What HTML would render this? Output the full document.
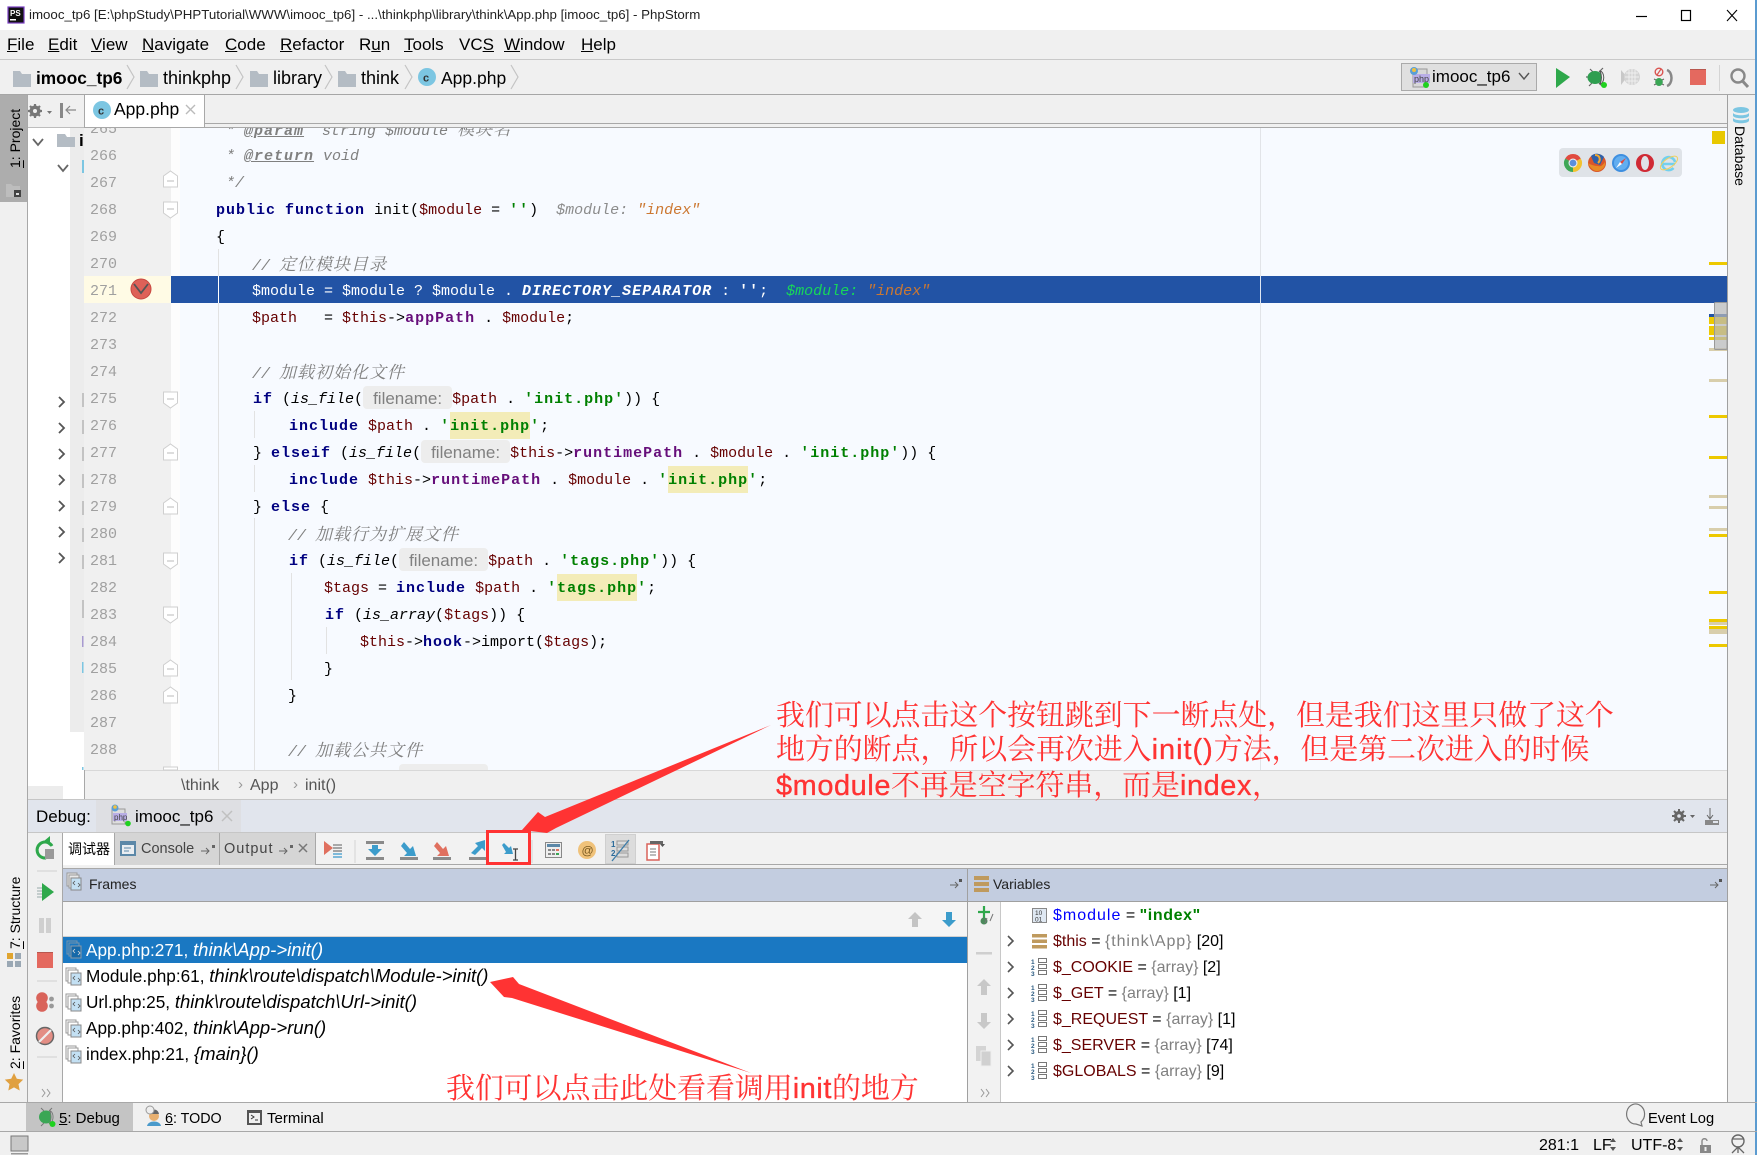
<!DOCTYPE html>
<html lang="zh"><head><meta charset="utf-8"><title>PhpStorm</title>
<style>
*{box-sizing:border-box}
html,body{margin:0;padding:0;width:1757px;height:1155px;overflow:hidden;background:#f0f0f0}
body{position:relative;font-family:"Liberation Sans","Noto Sans CJK SC",sans-serif;color:#000}
.r{position:absolute}
.t{position:absolute;white-space:pre;line-height:20px;height:20px}
u{text-decoration:underline}
.c{position:absolute;z-index:0;margin-top:2px;white-space:pre;height:27px;line-height:27px;font-family:"Liberation Mono","Noto Serif CJK SC",monospace;font-size:15px;color:#000}
.c.j{margin-top:0}
.n{position:absolute;left:90px;margin-top:2px;height:27px;line-height:27px;font-family:"Liberation Mono",monospace;font-size:15px;color:#a0a0a0}
.k{font-weight:bold;color:#000080;letter-spacing:1px}
.s{font-weight:bold;color:#008000;letter-spacing:1px}
.f{font-weight:bold;color:#660e7a;letter-spacing:1px}
.v{color:#660000}
.i{font-style:italic}
.cm{font-style:italic;color:#808080}
.cj{font-family:"Noto Serif CJK SC",serif;font-size:17px;letter-spacing:1px;font-style:italic;color:#808080}
.dt{font-weight:bold;letter-spacing:1px;text-decoration:underline}
.hl{position:relative}
.hl::before{content:"";position:absolute;left:0;right:0;top:-6px;height:27px;background:#f3ecb8;z-index:-1}
.h{display:inline-block;height:23px;vertical-align:top;margin-top:0;background:#ededed;border-radius:4px;color:#808080;font:17px/25px "Liberation Sans",sans-serif;text-align:center;letter-spacing:0;overflow:hidden}
.g{position:absolute;width:1px;background:#e2e2e2}
.ih{font-style:italic;color:#8c8c8c}
.io{font-style:italic;color:#cc7832}
.vr{writing-mode:vertical-rl;transform:rotate(180deg);position:absolute;white-space:pre;font-size:14px;line-height:16px}
.an{position:absolute;white-space:pre;color:#ff3333;font-family:"Noto Serif CJK SC","Liberation Sans",serif;z-index:8;line-height:36px;height:36px;font-size:28.9px}
.an b{font-family:"Liberation Sans",sans-serif;font-weight:normal;-webkit-text-stroke:.35px #ff3333;letter-spacing:.6px}
.ln{position:absolute;left:0;width:1757px;height:1px}
.fr{font-size:17.2px}
.fr i{font-size:18.5px}
</style></head><body>

<!-- title bar -->
<div class="r" style="left:0;top:0;width:1757px;height:30px;background:#fff"></div>
<div class="t" style="left:29px;top:5px;font-size:13.3px;color:#222">imooc_tp6 [E:\phpStudy\PHPTutorial\WWW\imooc_tp6] - ...\thinkphp\library\think\App.php [imooc_tp6] - PhpStorm</div>

<!-- menu -->
<div class="t" style="left:7px;top:35px;font-size:17px"><u>F</u>ile</div>
<div class="t" style="left:48px;top:35px;font-size:17px"><u>E</u>dit</div>
<div class="t" style="left:91px;top:35px;font-size:17px"><u>V</u>iew</div>
<div class="t" style="left:142px;top:35px;font-size:17px"><u>N</u>avigate</div>
<div class="t" style="left:225px;top:35px;font-size:17px"><u>C</u>ode</div>
<div class="t" style="left:280px;top:35px;font-size:17px"><u>R</u>efactor</div>
<div class="t" style="left:359px;top:35px;font-size:17px">R<u>u</u>n</div>
<div class="t" style="left:404px;top:35px;font-size:17px"><u>T</u>ools</div>
<div class="t" style="left:459px;top:35px;font-size:17px">VC<u>S</u></div>
<div class="t" style="left:504px;top:35px;font-size:17px"><u>W</u>indow</div>
<div class="t" style="left:581px;top:35px;font-size:17px"><u>H</u>elp</div>
<div class="ln" style="top:59px;background:#c9c9c9"></div>

<!-- nav bar -->
<div class="t" style="left:36px;top:68px;font-size:17.3px;font-weight:bold">imooc_tp6</div>
<div class="t" style="left:163px;top:68px;font-size:18px">thinkphp</div>
<div class="t" style="left:273px;top:68px;font-size:18px">library</div>
<div class="t" style="left:361px;top:68px;font-size:18px">think</div>
<div class="t" style="left:441px;top:68px;font-size:17.5px">App.php</div>
<div class="ln" style="top:94px;background:#a6a6a6"></div>
<div class="r" style="left:1401px;top:63px;width:136px;height:28px;background:#e0e0e0;border:1px solid #aaa"></div>
<div class="t" style="left:1432px;top:67px;font-size:17px">imooc_tp6</div>

<!-- left strip project -->
<div class="r" style="left:0;top:95px;width:27px;height:107px;background:#adadad"></div>
<div class="vr" style="left:7px;top:110px;height:58px"><u>1</u>: Project</div>
<div class="r" style="left:27px;top:95px;width:1px;height:1007px;background:#a8a8a8"></div>

<!-- project panel -->
<div class="r" style="left:28px;top:128px;width:56px;height:671px;background:#fff"></div>
<div class="r" style="left:70px;top:128px;width:14px;height:604px;background:#ececec"></div>
<div class="r" style="left:28px;top:786px;width:35px;height:13px;background:#ececec"></div>
<div class="r" style="left:28px;top:127px;width:56px;height:1px;background:#bdbdbd"></div>
<div class="r" style="left:84px;top:95px;width:1px;height:704px;background:#a8a8a8"></div>
<div class="t" style="left:79px;top:131px;font-size:17px;font-weight:bold;width:5px;overflow:hidden">i</div>

<!-- tab row -->
<div class="r" style="left:85px;top:95px;width:120px;height:33px;background:#fff;border-right:1px solid #a8a8a8"></div>
<div class="r" style="left:205px;top:123px;width:1522px;height:1px;background:#a8a8a8"></div>
<div class="r" style="left:85px;top:127px;width:1642px;height:1px;background:#a8a8a8"></div>
<div class="t" style="left:114px;top:99px;font-size:17.5px">App.php</div>

<!-- editor -->
<div class="r" style="left:84px;top:128px;width:1643px;height:642px;overflow:hidden;background:#f7faff">
<div class="r" style="left:-84px;top:-128px;width:1757px;height:1155px">
<div class="r" style="left:84px;top:0;width:87px;height:1155px;background:#f0f0f0"></div>
<div class="r" style="left:171px;top:0;width:9px;height:1155px;background:#fdfdfd"></div>
<div class="r" style="left:84px;top:276px;width:87px;height:27px;background:#fffbe5"></div>
<div class="r" style="left:171px;top:276px;width:1556px;height:27px;background:#2253a5"></div>
<div class="r" style="left:1260px;top:0;width:1px;height:1155px;background:#e2e4e8"></div>
<div class="r" style="left:1260px;top:276px;width:1px;height:27px;background:#dfe6f2"></div>
<div class="g" style="left:218px;top:249px;height:521px"></div>
<div class="r" style="left:218px;top:276px;width:1px;height:27px;background:#fff"></div>
<div class="g" style="left:254px;top:411px;height:27px"></div>
<div class="g" style="left:254px;top:465px;height:27px"></div>
<div class="g" style="left:254px;top:518px;height:252px"></div>
<div class="g" style="left:291px;top:573px;height:107px"></div>
<div class="g" style="left:326px;top:627px;height:27px"></div>

<div class="n" style="top:114px">265</div><div class="n" style="top:141px">266</div><div class="n" style="top:168px">267</div><div class="n" style="top:195px">268</div><div class="n" style="top:222px">269</div><div class="n" style="top:249px">270</div><div class="n" style="top:276px">271</div><div class="n" style="top:303px">272</div><div class="n" style="top:330px">273</div><div class="n" style="top:357px">274</div><div class="n" style="top:384px">275</div><div class="n" style="top:411px">276</div><div class="n" style="top:438px">277</div><div class="n" style="top:465px">278</div><div class="n" style="top:492px">279</div><div class="n" style="top:519px">280</div><div class="n" style="top:546px">281</div><div class="n" style="top:573px">282</div><div class="n" style="top:600px">283</div><div class="n" style="top:627px">284</div><div class="n" style="top:654px">285</div><div class="n" style="top:681px">286</div><div class="n" style="top:708px">287</div><div class="n" style="top:735px">288</div><div class="n" style="top:762px">289</div>

<div class="c cm j" style="left:226px;top:114px">* <span class="dt">@param</span>  string $module <span class="cj">模块名</span></div>
<div class="c cm" style="left:226px;top:141px">* <span class="dt">@return</span> void</div>
<div class="c cm" style="left:226px;top:168px">*/</div>
<div class="c" style="left:216px;top:195px"><span class="k">public</span> <span class="k">function</span> init(<span class="v">$module</span> = <span class="s">''</span>)  <span class="ih">$module: </span><span class="io">"index"</span></div>
<div class="c" style="left:216px;top:222px">{</div>
<div class="c cm j" style="left:252px;top:249px">// <span class="cj">定位模块目录</span></div>
<div class="c" style="left:252px;top:276px;color:#fff">$module = $module ? $module . <span style="font-weight:bold;font-style:italic;letter-spacing:1px">DIRECTORY_SEPARATOR</span> : <span style="font-weight:bold;letter-spacing:1px">''</span>;  <span style="font-style:italic;color:#17d65a">$module: </span><span style="font-style:italic;color:#cc7832">"index"</span></div>
<div class="c" style="left:252px;top:303px"><span class="v">$path</span>   = <span class="v">$this</span>-&gt;<span class="f">appPath</span> . <span class="v">$module</span>;</div>
<div class="c cm j" style="left:252px;top:357px">// <span class="cj">加载初始化文件</span></div>
<div class="c" style="left:253px;top:384px"><span class="k">if</span> (<span class="i">is_file</span>(<span class="h" style="width:89px">filename:</span><span class="v">$path</span> . <span class="s">'init.php'</span>)) {</div>
<div class="c" style="left:289px;top:411px"><span class="k">include</span> <span class="v">$path</span> . <span class="s">'<span class="hl">init.php</span>'</span>;</div>
<div class="c" style="left:253px;top:438px">} <span class="k">elseif</span> (<span class="i">is_file</span>(<span class="h" style="width:89px">filename:</span><span class="v">$this</span>-&gt;<span class="f">runtimePath</span> . <span class="v">$module</span> . <span class="s">'init.php'</span>)) {</div>
<div class="c" style="left:289px;top:465px"><span class="k">include</span> <span class="v">$this</span>-&gt;<span class="f">runtimePath</span> . <span class="v">$module</span> . <span class="s">'<span class="hl">init.php</span>'</span>;</div>
<div class="c" style="left:253px;top:492px">} <span class="k">else</span> {</div>
<div class="c cm j" style="left:288px;top:519px">// <span class="cj">加载行为扩展文件</span></div>
<div class="c" style="left:289px;top:546px"><span class="k">if</span> (<span class="i">is_file</span>(<span class="h" style="width:89px">filename:</span><span class="v">$path</span> . <span class="s">'tags.php'</span>)) {</div>
<div class="c" style="left:324px;top:573px"><span class="v">$tags</span> = <span class="k">include</span> <span class="v">$path</span> . <span class="s">'<span class="hl">tags.php</span>'</span>;</div>
<div class="c" style="left:325px;top:600px"><span class="k">if</span> (<span class="i">is_array</span>(<span class="v">$tags</span>)) {</div>
<div class="c" style="left:360px;top:627px"><span class="v">$this</span>-&gt;<span class="k">hook</span>-&gt;import(<span class="v">$tags</span>);</div>
<div class="c" style="left:324px;top:654px">}</div>
<div class="c" style="left:288px;top:681px">}</div>
<div class="c cm j" style="left:288px;top:735px">// <span class="cj">加载公共文件</span></div>
<div class="c" style="left:289px;top:762px"><span class="k">if</span> (<span class="i">is_file</span>(<span class="h" style="width:89px">filename:</span><span class="v">$path</span> . <span class="s">'common.php'</span>)) {</div>
</div></div>

<!-- browser popup -->
<div class="r" style="left:1559px;top:148px;width:123px;height:29px;background:#dfe3e8;border-radius:4px"></div>

<!-- breadcrumb -->
<div class="r" style="left:85px;top:770px;width:1642px;height:29px;background:#f0f0f0;border-top:1px solid #d8d8d8"></div>
<div class="t" style="left:181px;top:776px;font-size:16px;color:#555">\think</div>
<div class="t" style="left:250px;top:776px;font-size:16px;color:#555">App</div>
<div class="t" style="left:305px;top:776px;font-size:16px;color:#555">init()</div>
<div class="t" style="left:238px;top:775px;font-size:15px;color:#999">›</div>
<div class="t" style="left:293px;top:775px;font-size:15px;color:#999">›</div>

<!-- right strip -->
<div class="r" style="left:1727px;top:95px;width:1px;height:1007px;background:#a0a0a0"></div>
<div class="r" style="left:1755px;top:0;width:2px;height:1155px;background:#5b9bd0"></div>
<div class="vr" style="left:1732px;top:126px;height:56px;transform:none">Database</div>

<!-- debug header -->
<div class="r" style="left:28px;top:799px;width:1699px;height:34px;background:#e1e5ed;border-top:1px solid #c6c6c6;border-bottom:1px solid #c6c6c6"></div>
<div class="r" style="left:96px;top:800px;width:145px;height:32px;background:#dedfe3"></div>
<div class="t" style="left:36px;top:807px;font-size:17px">Debug:</div>
<div class="t" style="left:135px;top:807px;font-size:17px">imooc_tp6</div>

<!-- debug toolbar -->
<div class="r" style="left:63px;top:833px;width:1664px;height:33px;background:#f2f2f2"></div>
<div class="r" style="left:63px;top:864px;width:1664px;height:1px;background:#a8a8a8"></div>
<div class="r" style="left:63px;top:868px;width:1664px;height:1px;background:#a8a8a8"></div>
<div class="r" style="left:62px;top:833px;width:1px;height:269px;background:#a8a8a8"></div>
<div class="r" style="left:63px;top:833px;width:51px;height:32px;background:#fff"></div>
<div class="r" style="left:114px;top:833px;width:105px;height:32px;background:#d5d5d5;border-left:1px solid #a8a8a8"></div>
<div class="r" style="left:219px;top:833px;width:97px;height:32px;background:#d5d5d5;border-left:1px solid #a8a8a8;border-right:1px solid #a8a8a8"></div>
<div class="r" style="left:605px;top:834px;width:31px;height:30px;background:#dcdcdc;border:1px solid #cfcfcf"></div>
<div class="t" style="left:68px;top:839px;font-size:14px">调试器</div>
<div class="t" style="left:141px;top:839px;font-size:14.5px;color:#444">Console</div>
<div class="t" style="left:224px;top:839px;font-size:14.5px;color:#444;letter-spacing:1px">Output</div>

<!-- panel headers -->
<div class="r" style="left:63px;top:869px;width:1664px;height:33px;background:#c3cde0;border-bottom:1px solid #a0a0a0"></div>
<div class="t" style="left:89px;top:874px;font-size:14px;color:#222">Frames</div>
<div class="t" style="left:993px;top:874px;font-size:14px;color:#222">Variables</div>
<div class="r" style="left:63px;top:902px;width:904px;height:35px;background:#f5f5f5;border-bottom:1px solid #d0d0d0"></div>
<div class="r" style="left:63px;top:937px;width:904px;height:165px;background:#fff"></div>
<div class="r" style="left:63px;top:937px;width:904px;height:26px;background:#1a78c2"></div>
<div class="r" style="left:967px;top:869px;width:1px;height:233px;background:#a0a0a0"></div>
<div class="r" style="left:968px;top:902px;width:33px;height:200px;background:#f2f2f2;border-right:1px solid #c8c8c8"></div>
<div class="r" style="left:1001px;top:902px;width:726px;height:200px;background:#fff"></div>

<!-- frames -->
<div class="t fr" style="left:86px;top:940px;color:#fff">App.php:271, <i>think\App-&gt;init()</i></div>
<div class="t fr" style="left:86px;top:966px">Module.php:61, <i>think\route\dispatch\Module-&gt;init()</i></div>
<div class="t fr" style="left:86px;top:992px">Url.php:25, <i>think\route\dispatch\Url-&gt;init()</i></div>
<div class="t fr" style="left:86px;top:1018px">App.php:402, <i>think\App-&gt;run()</i></div>
<div class="t fr" style="left:86px;top:1044px">index.php:21, <i>{main}()</i></div>

<!-- variables -->
<div class="t" style="left:1053px;top:906px;font-size:16px"><span style="color:#0000ff;letter-spacing:1px">$module</span> = <b style="color:#008000;letter-spacing:.6px">"index"</b></div>
<div class="t" style="left:1053px;top:932px;font-size:16px"><span class="v">$this</span> = <span style="color:#808080;letter-spacing:.9px">{think\App}</span> [20]</div>
<div class="t" style="left:1053px;top:958px;font-size:16px"><span class="v">$_COOKIE</span> = <span style="color:#808080">{array}</span> [2]</div>
<div class="t" style="left:1053px;top:984px;font-size:16px"><span class="v">$_GET</span> = <span style="color:#808080">{array}</span> [1]</div>
<div class="t" style="left:1053px;top:1010px;font-size:16px"><span class="v">$_REQUEST</span> = <span style="color:#808080">{array}</span> [1]</div>
<div class="t" style="left:1053px;top:1036px;font-size:16px"><span class="v">$_SERVER</span> = <span style="color:#808080">{array}</span> [74]</div>
<div class="t" style="left:1053px;top:1062px;font-size:16px"><span class="v">$GLOBALS</span> = <span style="color:#808080">{array}</span> [9]</div>

<!-- left strip lower -->
<div class="vr" style="left:7px;top:875px;height:74px"><u>7</u>: Structure</div>
<div class="vr" style="left:7px;top:1000px;height:69px"><u>2</u>: Favorites</div>

<!-- bottom bars -->
<div class="ln" style="top:1102px;background:#a8a8a8"></div>
<div class="r" style="left:26px;top:1103px;width:107px;height:28px;background:#c4c4c4"></div>
<div class="ln" style="top:1131px;background:#a8a8a8"></div>
<div class="t" style="left:59px;top:1109px;font-size:15px"><u>5</u>: Debug</div>
<div class="t" style="left:165px;top:1109px;font-size:14.3px"><u>6</u>: TODO</div>
<div class="t" style="left:267px;top:1109px;font-size:15px">Terminal</div>
<div class="t" style="left:1648px;top:1109px;font-size:14.7px">Event Log</div>
<div class="t" style="left:1539px;top:1136px;font-size:16px">281:1</div>
<div class="t" style="left:1593px;top:1136px;font-size:16px">LF</div>
<div class="t" style="left:1631px;top:1136px;font-size:16px">UTF-8</div>

<!-- icons overlay -->
<svg class="r" style="left:0;top:0;z-index:5" width="1757" height="1155" viewBox="0 0 1757 1155">
<!-- app icon -->
<rect x="8" y="7" width="16" height="16" fill="#111" stroke="#7b3fc4" stroke-width="1.2"/>
<text x="10" y="16" font-size="8" font-weight="bold" fill="#fff" font-family="Liberation Sans">PS</text>
<rect x="10" y="19" width="6" height="1.5" fill="#fff"/>
<!-- window buttons -->
<path d="M1636 16.5h11" stroke="#000" stroke-width="1.2"/>
<rect x="1681.5" y="10.5" width="9" height="10" fill="none" stroke="#000" stroke-width="1.2"/>
<path d="M1727 10l10 11M1737 10l-10 11" stroke="#000" stroke-width="1.1"/>
<!-- nav folders & chevrons -->
<g fill="#b4bcc4">
<path d="M13 71h7l2 3h9v13H13z"/><path d="M140 71h7l2 3h9v13h-18z"/><path d="M250 71h7l2 3h9v13h-18z"/><path d="M338 71h7l2 3h9v13h-18z"/>
</g>
<g fill="none" stroke="#c4c4c4" stroke-width="1.2">
<path d="M127 65l7 12-7 12"/><path d="M236 65l7 12-7 12"/><path d="M325 65l7 12-7 12"/><path d="M405 65l7 12-7 12"/><path d="M511 65l7 12-7 12"/>
</g>
<circle cx="427" cy="77" r="9" fill="#7cc6e2"/><text x="423" y="81.500" font-size="11" font-weight="bold" fill="#333" font-family="Liberation Sans">c</text>
<!-- run config -->
<rect x="1413" y="69" width="14" height="18" fill="#d8d8d8" stroke="#999"/>
<rect x="1413" y="74" width="17" height="9" fill="#b9aee6"/>
<text x="1414" y="82" font-size="9" fill="#444" font-family="Liberation Sans">php</text>
<circle cx="1414" cy="71" r="4" fill="#5a9fd6"/><circle cx="1414" cy="70" r="2" fill="#f0c040"/>
<circle cx="1426" cy="85" r="3" fill="#1fd11f"/>
<path d="M1519 73l5 6 5-6" fill="none" stroke="#555" stroke-width="1.4"/>
<path d="M1556 68l14 9-14 11z" fill="#2ea84b"/>
<!-- bug -->
<path d="M1590 69l3 3M1603 68l-4 4M1586 77h4M1589 86l3-3M1603 87l-4-4" stroke="#666" stroke-width="1.2"/>
<ellipse cx="1595" cy="77.500" rx="7.500" ry="6.500" fill="#2f9e50"/><path d="M1600 71c5 1 5 12 0 13 1.800-4 1.800-9 0-13z" fill="#eef0ee" stroke="#555"/>
<circle cx="1604" cy="85" r="3" fill="#1fd11f"/>
<!-- coverage -->
<path d="M1621 70l6 7-6 8z" fill="#c8c8c8"/><circle cx="1632" cy="77" r="8" fill="#d4d4d4"/>
<path d="M1626 73h12M1625 77h14M1626 81h12M1629 70v14M1632 69v16M1635 70v14" stroke="#eee"/>
<!-- stop/attach -->
<circle cx="1659" cy="72" r="3.800" fill="none" stroke="#d9534f" stroke-width="1.400"/><path d="M1657 75l4-6" stroke="#d9534f" stroke-width="1.200"/>
<ellipse cx="1659" cy="82" rx="3.800" ry="4" fill="#3aa655"/><path d="M1654 79l2 1M1654 85l2-1M1664 79l-2 1M1664 85l-2-1" stroke="#666"/><path d="M1667 70c6 2 6 14 0 16" fill="none" stroke="#888" stroke-width="2.500"/>
<!-- stop -->
<rect x="1690" y="69" width="16" height="16" fill="#e4695f"/><rect x="1690" y="69" width="16" height="1" fill="#b8574f"/>
<path d="M1719.500 65v26" stroke="#d4d4d4"/>
<circle cx="1738" cy="76" r="6.500" fill="none" stroke="#888" stroke-width="2.400"/><path d="M1742.500 81l5.500 6" stroke="#888" stroke-width="3"/>
<!-- Project strip mini -->
<path d="M6 197v-13h5l2 2h7v11z" fill="#bdbdbd"/><rect x="14" y="190" width="7" height="7" fill="#444"/><rect x="16" y="193" width="3" height="2" fill="#ddd"/>
<!-- gear & hide -->
<g transform="translate(35,127)"><circle cx="0" cy="-16" r="5.500" fill="#777"/><path d="M0-23v14M-7-16h14M-5-21l10 10M5-21l-10 10" stroke="#777" stroke-width="2.200"/><circle cx="0" cy="-16" r="2" fill="#f0f0f0"/><path d="M12-16h5l-2.500 3z" fill="#777"/></g>
<rect x="60" y="103" width="3" height="15" fill="#888"/><path d="M76 110h-9M70 106l-4 4 4 4" stroke="#888" fill="none" stroke-width="1.200"/>
<!-- tab C & x -->
<circle cx="102" cy="110" r="9" fill="#7cc6e2"/><text x="98" y="114.500" font-size="11" font-weight="bold" fill="#333" font-family="Liberation Sans">c</text>
<path d="M186 105l9 9M195 105l-9 9" stroke="#bbb" stroke-width="1.400"/>
<!-- project tree -->
<path d="M33 139l5 6 5-6" fill="none" stroke="#666" stroke-width="1.800"/><path d="M58 165l5 6 5-6" fill="none" stroke="#666" stroke-width="1.800"/>
<path d="M57 134h8l2 3h8v10H57z" fill="#b4bcc4"/><rect x="82" y="160" width="2" height="13" fill="#7cc6e2"/>
<g fill="none" stroke="#555" stroke-width="1.800"><path d="M59 397l5 5-5 5"/><path d="M59 423l5 5-5 5"/><path d="M59 449l5 5-5 5"/><path d="M59 475l5 5-5 5"/><path d="M59 501l5 5-5 5"/><path d="M59 527l5 5-5 5"/><path d="M59 553l5 5-5 5"/></g>
<g fill="#9a9a9a"><rect x="82.500" y="393" width="1" height="14"/><rect x="82.500" y="420" width="1" height="14"/><rect x="82.500" y="447" width="1" height="14"/><rect x="82.500" y="474" width="1" height="14"/><rect x="82.500" y="501" width="1" height="14"/><rect x="82.500" y="528" width="1" height="14"/><rect x="82.500" y="555" width="1" height="14"/><rect x="82.500" y="600" width="1" height="18"/></g>
<rect x="82" y="636" width="1.500" height="11" fill="#a79ad0"/><rect x="82" y="662" width="1.500" height="11" fill="#7cc6e2"/><rect x="82" y="767" width="1.500" height="3" fill="#7cc6e2"/>
<!-- fold markers -->
<g fill="#fff" stroke="#cfcfcf" stroke-width="1">
<path d="M163.500 189v-11l7-5 7 5v11z" transform="translate(0,-2)"/>
<path d="M163.500 202v11l7 5 7-5v-11z"/>
<path d="M163.500 392v11l7 5 7-5v-11z"/>
<path d="M163.500 461v-11l7-5 7 5v11z" transform="translate(0,-1)"/>
<path d="M163.500 515v-11l7-5 7 5v11z" transform="translate(0,-1)"/>
<path d="M163.500 553v11l7 5 7-5v-11z"/>
<path d="M163.500 607v11l7 5 7-5v-11z"/>
<path d="M163.500 677v-11l7-5 7 5v11z" transform="translate(0,-1)"/>
<path d="M163.500 704v-11l7-5 7 5v11z" transform="translate(0,-1)"/>
</g>
<g stroke="#bbb" stroke-width="1"><path d="M167 181h7M167 209h7M167 399h7M167 453h7M167 507h7M167 561h7M167 615h7M167 669h7M167 696h7"/></g>
<path d="M163.500 767v3h14v-3z" fill="#fff" stroke="#cfcfcf"/>
<!-- breakpoint -->
<circle cx="141" cy="289" r="10" fill="#de6158"/><circle cx="141" cy="289" r="10" fill="none" stroke="#c8473f"/><path d="M134 284l7 9 7-9" fill="none" stroke="#555" stroke-width="1.800"/>
<!-- error stripe -->
<rect x="1712" y="131" width="13" height="13" fill="#e8c800"/>
<g fill="#edc900"><rect x="1709" y="262" width="18" height="3"/><rect x="1709" y="317" width="18" height="7"/><rect x="1709" y="326" width="18" height="9"/><rect x="1709" y="337" width="18" height="3"/><rect x="1709" y="415" width="18" height="3"/><rect x="1709" y="456" width="18" height="3"/><rect x="1709" y="534" width="18" height="3"/><rect x="1709" y="591" width="18" height="3"/><rect x="1709" y="619" width="18" height="3"/><rect x="1709" y="626" width="18" height="3"/><rect x="1709" y="644" width="18" height="3"/></g>
<g fill="#d8ceac"><rect x="1709" y="348" width="18" height="3"/><rect x="1709" y="379" width="18" height="3"/><rect x="1709" y="495" width="18" height="3"/><rect x="1709" y="506" width="18" height="3"/><rect x="1709" y="528" width="18" height="3"/><rect x="1709" y="622" width="18" height="3"/><rect x="1709" y="629" width="18" height="5"/></g>
<rect x="1709" y="314" width="18" height="3" fill="#2253a5"/>
<rect x="1714.500" y="302.500" width="12.500" height="47" rx="1" fill="#b9b9b9" fill-opacity=".72" stroke="#999"/>
<!-- database -->
<g fill="#7cc6e2"><ellipse cx="1741" cy="110" rx="8" ry="3"/><path d="M1733 113c2 3 14 3 16 0v3c-2 3-14 3-16 0z"/><path d="M1733 118c2 3 14 3 16 0v3c-2 3-14 3-16 0z"/></g>
<!-- browsers -->
<g transform="translate(1573,163)"><path d="M0 0L-7.800-4.500A9 9 0 0 1 7.800-4.500Z" fill="#e04a3f"/><path d="M0 0L7.800-4.500A9 9 0 0 1 0 9Z" fill="#f2c230"/><path d="M0 0L0 9A9 9 0 0 1-7.800-4.500Z" fill="#3fa757"/><circle r="4.500" fill="#eee"/><circle r="3.400" fill="#5a8fdc"/></g>
<g transform="translate(1597,163)"><circle r="9" fill="#d9562b"/><path d="M-6-7A9 9 0 0 1 7-6L3 2-3 0z" fill="#2f5fa8"/><path d="M-9 0c1 4 6 9 10 8 5-1 8-5 7-9-2 3-4 5-7 4-3 0-7-1-10-3z" fill="#e88a25"/><path d="M-2-8c5 0 6 5 3 8" fill="none" stroke="#f0a830" stroke-width="2"/></g>
<g transform="translate(1621,163)"><circle r="9" fill="#3e8fe0"/><circle r="7" fill="#62aef0"/><path d="M5-5L1 1-1-1z" fill="#e0473a"/><path d="M-5 5L1 1-1-1z" fill="#fff"/></g>
<g transform="translate(1645,163)"><ellipse rx="9" ry="9" fill="#d02a35"/><ellipse rx="4" ry="7" fill="#dfe3e8"/></g>
<g transform="translate(1669,163)"><path d="M-6 1h12M6-1a6.500 6.500 0 1 0-1.500 6" fill="none" stroke="#72d0ee" stroke-width="2.600"/><ellipse rx="10" ry="4.500" transform="rotate(-35)" fill="none" stroke="#eed060" stroke-width="1"/></g>
<!-- debug header icons -->
<rect x="112" y="809" width="13" height="15" fill="#ddd" stroke="#999"/><rect x="113" y="813" width="14" height="8" fill="#b9aee6"/><text x="114" y="820" font-size="8" fill="#444" font-family="Liberation Sans">php</text><circle cx="115" cy="808" r="3.500" fill="#5a9fd6"/><circle cx="115" cy="807" r="1.800" fill="#f0c040"/><circle cx="128" cy="823.500" r="2.800" fill="#1fd11f"/>
<path d="M222 811l10 10M232 811l-10 10" stroke="#c0c0c0" stroke-width="1.500"/>
<g transform="translate(1679,816)"><circle r="5" fill="#666"/><path d="M0-7v14M-7 0h14M-5-5l10 10M5-5l-10 10" stroke="#666" stroke-width="2"/><circle r="1.800" fill="#e1e5ed"/><path d="M11-1h5l-2.500 3z" fill="#666"/></g>
<path d="M1710 808v10M1707 815l3 4 3-4" stroke="#666" fill="none"/><rect x="1705" y="820" width="14" height="5" fill="#888"/><rect x="1713" y="821" width="5" height="2" fill="#e1e5ed"/>
<!-- left debug column -->
<path d="M52 846a8 8 0 1 0-6 12" fill="none" stroke="#2ea84b" stroke-width="3"/><path d="M44 841l6-5v10z" fill="#2ea84b"/><rect x="45" y="849" width="9" height="10" fill="#999"/>
<path d="M37 871h20" stroke="#cfcfcf"/>
<g stroke="#9aa" stroke-width="1"><path d="M37 888h7M37 891h7M37 894h7M37 897h7"/></g><path d="M42 883l12 9-12 9z" fill="#2ea84b"/>
<rect x="39" y="918" width="5" height="15" fill="#cfcfcf"/><rect x="46" y="918" width="5" height="15" fill="#cfcfcf"/>
<rect x="37" y="952" width="16" height="16" fill="#e4695f"/><rect x="37" y="952" width="16" height="1" fill="#b8574f"/>
<path d="M37 981h20" stroke="#cfcfcf"/>
<circle cx="42" cy="998" r="5.800" fill="#d9635a"/><circle cx="42" cy="1006" r="5.800" fill="#d9635a"/><circle cx="51.500" cy="999" r="2.400" fill="#999"/><circle cx="51.500" cy="1006" r="2.400" fill="#999"/>
<circle cx="45" cy="1036" r="8.500" fill="#e38d84" stroke="#666" stroke-width="1.500"/><path d="M39 1042l12-12" stroke="#eee" stroke-width="2.200"/>
<path d="M37 1057h20" stroke="#cfcfcf"/>
<path d="M42 1089l3 4-3 4M47 1089l3 4-3 4" fill="none" stroke="#999"/>
<!-- structure & star -->
<g><rect x="7" y="953" width="6" height="6" fill="#e0a530"/><rect x="15" y="953" width="6" height="6" fill="#9aa8b4"/><rect x="7" y="961" width="6" height="6" fill="#9aa8b4"/><rect x="15" y="961" width="6" height="6" fill="#9aa8b4"/></g>
<path d="M14 1073l2.800 5.800 6.400.8-4.700 4.500 1.200 6.400-5.700-3.100-5.700 3.100 1.200-6.400-4.700-4.500 6.400-.8z" fill="#e0a040"/>
<!-- tool tabs -->
<rect x="120" y="841" width="16" height="15" fill="#5c88a8"/><rect x="122" y="845" width="12" height="9" fill="#eaeef2"/><path d="M124 848h7M124 851h5" stroke="#5c88a8"/>
<path d="M201 851h8M206 848l3 3-3 3" fill="none" stroke="#666"/><rect x="212" y="845" width="3" height="3" fill="#666"/>
<path d="M279 851h8M284 848l3 3-3 3" fill="none" stroke="#666"/><rect x="290" y="845" width="3" height="3" fill="#666"/>
<path d="M299 844l8 8M307 844l-8 8" stroke="#777" stroke-width="1.500"/>
<!-- toolbar icons -->
<path d="M324 841l9 7-9 7z" fill="#e0705f"/><path d="M333 848h9M333 851h9" stroke="#8a8a8a" stroke-width="1.400"/><path d="M333 845h9" stroke="#8a8a8a" stroke-width="1.400"/><path d="M333 854h9M333 857h9" stroke="#58a8d2" stroke-width="1.500"/>
<path d="M355 840v23" stroke="#d4d4d4"/>
<rect x="366" y="841" width="18" height="3" fill="#8a8a8a"/><rect x="366" y="857" width="18" height="3" fill="#8a8a8a"/><path d="M372 845h6v4h4l-7 7-7-7h4z" fill="#3c9ccb"/>
<rect x="400" y="857" width="18" height="3" fill="#8a8a8a"/><path d="M401 846l3-4 6 7 3-3 3 10h-12l3-3z" fill="#3c9ccb"/>
<rect x="433" y="857" width="18" height="3" fill="#8a8a8a"/><path d="M434 846l3-4 6 7 3-3 3 10h-12l3-3z" fill="#e0705f"/>
<rect x="469" y="857" width="18" height="3" fill="#8a8a8a"/><path d="M471 853l7-7-3-3 10-3v11l-3-3-7 7z" fill="#3c9ccb"/>
<path d="M502 845l2-2 5 5 2-2 2 8h-9l2-2z" fill="#3c9ccb"/><path d="M513 849h5M513 860h5M515.500 849v11" stroke="#444" stroke-width="1.300"/>
<path d="M532 840v23" stroke="#d4d4d4"/>
<rect x="545.500" y="842.500" width="16" height="15" fill="#eee" stroke="#888"/><rect x="547" y="844" width="13" height="3" fill="#5c88a8"/><rect x="548" y="849" width="3" height="2" fill="#888"/><rect x="552" y="849" width="3" height="2" fill="#888"/><rect x="556" y="849" width="3" height="2" fill="#e0705f"/><rect x="548" y="853" width="3" height="2" fill="#888"/><rect x="552" y="853" width="3" height="2" fill="#888"/><rect x="556" y="853" width="3" height="2" fill="#3aa655"/>
<circle cx="587" cy="850" r="9" fill="#f0c27a"/><text x="581.500" y="854.500" font-size="12" fill="#7a5a20" font-family="Liberation Sans">@</text>
<text x="611" y="847" font-size="8" font-weight="bold" fill="#2a6a9a" font-family="Liberation Sans">1</text><text x="611" y="856" font-size="8" font-weight="bold" fill="#2a6a9a" font-family="Liberation Sans">2</text>
<rect x="617" y="841" width="11" height="4" fill="none" stroke="#999"/><rect x="617" y="847" width="11" height="4" fill="none" stroke="#999"/><rect x="617" y="853" width="11" height="4" fill="none" stroke="#999"/>
<path d="M612 861l17-21" stroke="#3c7ca8" stroke-width="1.300"/>
<rect x="647" y="844" width="12" height="16" fill="#fff" stroke="#d9635a" stroke-width="1.500"/><rect x="650" y="841" width="13" height="3" fill="#666"/><path d="M660 844h5l-2.500 3z" fill="#555"/><path d="M650 849h6M650 852h6M650 855h6" stroke="#777"/>
<!-- frames icons -->
<rect x="67" y="873" width="10" height="13" fill="#e8e8e8" stroke="#999"/><rect x="69" y="875" width="10" height="13" fill="#e8e8e8" stroke="#999"/><rect x="71" y="878" width="10" height="12" fill="#c3e0f3" stroke="#888"/><path d="M75 881l-2 2 2 2M78 883l2 2-2 2" fill="none" stroke="#555" stroke-width=".8"/>
<rect x="67" y="941" width="10" height="13" fill="#1a78c2" stroke="#7894aa"/><rect x="69" y="943" width="10" height="13" fill="#1a78c2" stroke="#7894aa"/><rect x="71" y="946" width="10" height="12" fill="#1668a8" stroke="#8a9aa8"/><path d="M75 949l-2 2 2 2M78 951l2 2-2 2" fill="none" stroke="#ddd" stroke-width=".8"/>
<rect x="66" y="968" width="10" height="13" fill="#fff" stroke="#999"/><rect x="68" y="970" width="10" height="13" fill="#fff" stroke="#999"/><rect x="71" y="973" width="10" height="12" fill="#c3e0f3" stroke="#888"/><path d="M75 976l-2 2 2 2M78 978l2 2-2 2" fill="none" stroke="#555" stroke-width=".8"/>
<rect x="66" y="994" width="10" height="13" fill="#fff" stroke="#999"/><rect x="68" y="996" width="10" height="13" fill="#fff" stroke="#999"/><rect x="71" y="999" width="10" height="12" fill="#c3e0f3" stroke="#888"/><path d="M75 1002l-2 2 2 2M78 1004l2 2-2 2" fill="none" stroke="#555" stroke-width=".8"/>
<rect x="66" y="1020" width="10" height="13" fill="#fff" stroke="#999"/><rect x="68" y="1022" width="10" height="13" fill="#fff" stroke="#999"/><rect x="71" y="1025" width="10" height="12" fill="#c3e0f3" stroke="#888"/><path d="M75 1028l-2 2 2 2M78 1030l2 2-2 2" fill="none" stroke="#555" stroke-width=".8"/>
<rect x="66" y="1046" width="10" height="13" fill="#fff" stroke="#999"/><rect x="68" y="1048" width="10" height="13" fill="#fff" stroke="#999"/><rect x="71" y="1051" width="10" height="12" fill="#c3e0f3" stroke="#888"/><path d="M75 1054l-2 2 2 2M78 1056l2 2-2 2" fill="none" stroke="#555" stroke-width=".8"/>
<!-- header right pin icons -->
<path d="M950 885h8M955 882l3 3-3 3" fill="none" stroke="#666"/><rect x="959" y="879" width="3" height="3" fill="#555"/>
<path d="M1710 885h8M1715 882l3 3-3 3" fill="none" stroke="#666"/><rect x="1719" y="879" width="3" height="3" fill="#555"/>
<g fill="#bf9a5e"><rect x="974" y="876" width="15" height="4"/><rect x="974" y="882" width="15" height="4"/><rect x="974" y="888" width="15" height="4"/></g>
<!-- frames up/down -->
<path d="M915 912l-7 7h4v8h6v-8h4z" fill="#c4c4c4"/><path d="M949 927l-7-7h4v-8h6v8h4z" fill="#3c9ccb"/>
<!-- vars col -->
<path d="M984 906v14M978 912h12" stroke="#2ea84b" stroke-width="2.200"/><ellipse cx="984" cy="921" rx="3.500" ry="3.500" fill="#4c8a5c"/><path d="M987 918l-2 5M993 914l-3 7" stroke="#777"/>
<rect x="976" y="952" width="16" height="2.500" fill="#cfcfcf"/>
<path d="M984 979l-7 7h4v9h6v-9h4z" fill="#c8c8c8"/><path d="M984 1029l-7-7h4v-9h6v9h4z" fill="#c8c8c8"/>
<rect x="976" y="1046" width="10" height="15" fill="#d4d4d4"/><rect x="981" y="1051" width="10" height="15" fill="#d0d0d0" stroke="#eee"/>
<path d="M981 1089l3 4-3 4M986 1089l3 4-3 4" fill="none" stroke="#999"/>
<!-- var arrows -->
<g fill="none" stroke="#555" stroke-width="1.600"><path d="M1008 936l5 5-5 5"/><path d="M1008 962l5 5-5 5"/><path d="M1008 988l5 5-5 5"/><path d="M1008 1014l5 5-5 5"/><path d="M1008 1040l5 5-5 5"/><path d="M1008 1066l5 5-5 5"/></g>
<!-- var icons -->
<rect x="1032.500" y="908.500" width="14" height="14" fill="#dfe8f2" stroke="#888"/><text x="1035" y="915" font-size="6.500" fill="#333" font-family="Liberation Sans">10</text><text x="1035" y="921.500" font-size="6.500" fill="#333" font-family="Liberation Sans">01</text>
<g fill="#bf9a5e"><rect x="1032" y="934" width="15" height="3.500"/><rect x="1032" y="939.500" width="15" height="3.500"/><rect x="1032" y="945" width="15" height="3.500"/></g>
<g font-size="6.500" font-weight="bold" fill="#2a5a80" font-family="Liberation Sans"><text x="1031" y="964">1</text><text x="1031" y="970">2</text><text x="1031" y="976">3</text><text x="1031" y="990">1</text><text x="1031" y="996">2</text><text x="1031" y="1002">3</text><text x="1031" y="1016">1</text><text x="1031" y="1022">2</text><text x="1031" y="1028">3</text><text x="1031" y="1042">1</text><text x="1031" y="1048">2</text><text x="1031" y="1054">3</text><text x="1031" y="1068">1</text><text x="1031" y="1074">2</text><text x="1031" y="1080">3</text></g>
<g fill="#fff" stroke="#777"><rect x="1038.500" y="958.500" width="8" height="4"/><rect x="1038.500" y="964.500" width="8" height="4"/><rect x="1038.500" y="970.500" width="8" height="4"/><rect x="1038.500" y="984.500" width="8" height="4"/><rect x="1038.500" y="990.500" width="8" height="4"/><rect x="1038.500" y="996.500" width="8" height="4"/><rect x="1038.500" y="1010.500" width="8" height="4"/><rect x="1038.500" y="1016.500" width="8" height="4"/><rect x="1038.500" y="1022.500" width="8" height="4"/><rect x="1038.500" y="1036.500" width="8" height="4"/><rect x="1038.500" y="1042.500" width="8" height="4"/><rect x="1038.500" y="1048.500" width="8" height="4"/><rect x="1038.500" y="1062.500" width="8" height="4"/><rect x="1038.500" y="1068.500" width="8" height="4"/><rect x="1038.500" y="1074.500" width="8" height="4"/></g>
<!-- bottom icons -->
<path d="M41 1108l3 3M52 1108l-3 3M41 1126l3-3M52 1126l-3-3" stroke="#777"/><ellipse cx="46" cy="1117" rx="7" ry="6.500" fill="#3aa655"/><path d="M50 1111c4 1 4 11 0 12 1.500-4 1.500-8 0-12z" fill="#cfd6d0" stroke="#777"/><circle cx="52.500" cy="1124" r="3" fill="#1fd11f"/>
<path d="M147 1126c1-6 13-6 14 0z" fill="#4a9acb"/><circle cx="154" cy="1116" r="5" fill="#e8b070"/><path d="M149 1114c1-6 9-6 10 0z" fill="#666"/><circle cx="150" cy="1110" r="4" fill="#eee" stroke="#999"/>
<rect x="247" y="1110" width="15" height="15" fill="#555"/><rect x="249" y="1113" width="11" height="10" fill="#f0f0f0"/><path d="M251 1115l3 2-3 2M255 1120h3" stroke="#333" fill="none"/>
<path d="M1641 1122a9 10 0 1 0-5 2l6 2z" fill="none" stroke="#777" stroke-width="1.200"/>
<rect x="11" y="1136" width="17" height="15" fill="#c8c8c8" stroke="#777"/><rect x="11" y="1153" width="17" height="1.500" fill="#999"/>
<path d="M1610 1142l3-4 3 4zM1610 1147l3 4 3-4z" fill="#555"/><path d="M1677 1142l3-4 3 4zM1677 1147l3 4 3-4z" fill="#555"/>
<rect x="1700" y="1145" width="11" height="8" fill="#888"/><path d="M1702 1145v-4c0-3 5-3 5 0" fill="none" stroke="#888" stroke-width="1.400"/><rect x="1704.500" y="1147" width="2" height="4" fill="#eee"/>
<circle cx="1738" cy="1141" r="6" fill="none" stroke="#666" stroke-width="1.400"/><path d="M1733 1139h10M1738 1147v6M1732 1153l6-6 6 6" stroke="#666" fill="none" stroke-width="1.300"/>
<!-- red annotation -->
<rect x="487.500" y="831.500" width="42" height="32" fill="none" stroke="#ff3333" stroke-width="3"/>
<path d="M522 830L538 812 545 817 771 725 556 828 547 833Z" fill="#ff3333"/>
<path d="M490 982L513 977 519 984 751 1073 512 998 504 997Z" fill="#ff3333"/>
</svg>

<!-- annotations -->
<div class="an" style="left:776px;top:696px">我们可以点击这个按钮跳到下一断点处，但是我们这里只做了这个</div>
<div class="an" style="left:776px;top:730px">地方的断点，所以会再次进入<b style="letter-spacing:1px">init()</b>方法，但是第二次进入的时候</div>
<div class="an" style="left:776px;top:766px"><b>$module</b>不再是空字符串，而是<b>index</b>，</div>
<div class="an" style="left:446px;top:1069px">我们可以点击此处看看调用<b>init</b>的地方</div>

</body></html>
